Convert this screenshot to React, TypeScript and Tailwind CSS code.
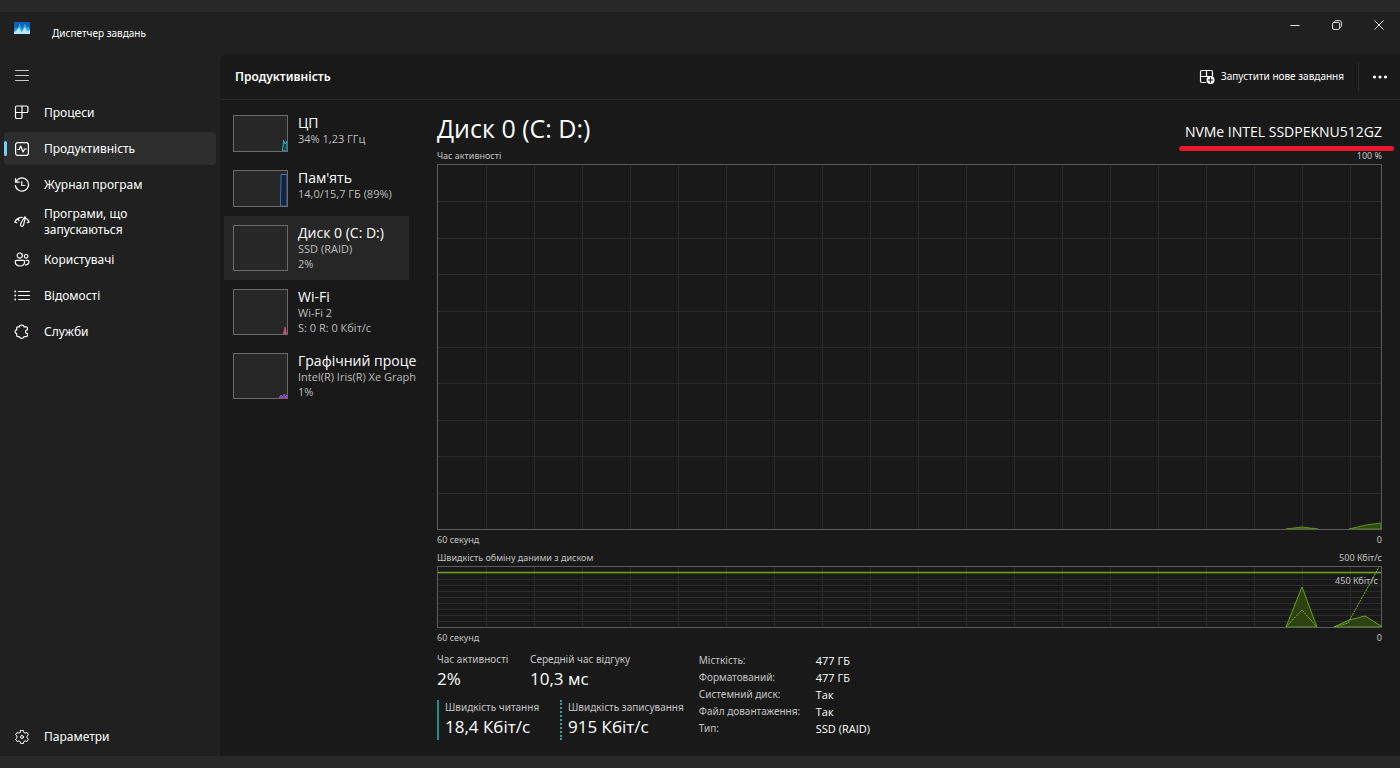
import type { ReactNode } from 'react';

interface NavItem { label: string; icon: ReactNode; active?: boolean; tall?: boolean; }

interface Resource {
  name: string;
  lines: string[];
  active?: boolean;
  graph?: ReactNode;
}

function Icon({ children }: { children: ReactNode }) {
  return (
    <svg
      viewBox="0 0 16 16"
      className="size-4 shrink-0"
      fill="none"
      stroke="currentColor"
      strokeWidth="1.2"
      strokeLinecap="round"
      strokeLinejoin="round"
      aria-hidden="true"
    >
      {children}
    </svg>
  );
}

const navItems: NavItem[] = [
  {
    label: 'Процеси',
    icon: (
      <Icon>
        <path d="M2.7 1h10a1.2 1.2 0 0 1 1.2 1.2v4.1a1.2 1.2 0 0 1-1.2 1.2H8v4.8a1.2 1.2 0 0 1-1.2 1.2H2.7a1.2 1.2 0 0 1-1.2-1.2V2.2A1.2 1.2 0 0 1 2.7 1ZM8 1v6.500H1.500" />
      </Icon>
    ),
  },
  {
    label: 'Продуктивність',
    active: true,
    icon: (
      <Icon>
        <rect x="1.6" y="1.6" width="12.8" height="12.8" rx="2.2" />
        <path d="M3.800 8.500h1.400l1.500-3.500 2.400 6 1.500-3h1.700" />
      </Icon>
    ),
  },
  {
    label: 'Журнал програм',
    icon: (
      <Icon>
        <path d="M1.500 1.500v3.700h3.700M1.800 5A6.600 6.600 0 1 1 1.400 8.600M7.800 4.500v4h3" />
      </Icon>
    ),
  },
  {
    label: 'Програми, що запускаються',
    tall: true,
    icon: (
      <Icon>
        <path d="M.8 8a8.400 8.400 0 0 1 7.400-4.700M12.200 4.600A8.400 8.400 0 0 1 15.200 8M.8 8l2 .8M4 4.700l1 1.900M15.200 8l-2 .8" />
        <path d="M10.600 3 7 9c-.9 1.600-.4 2.900.5 3.200s1.900-.3 2.200-1.800l1.700-7.100c.1-.6-.6-.7-.8-.3Z" />
      </Icon>
    ),
  },
  {
    label: 'Користувачі',
    icon: (
      <Icon>
        <circle cx="5.800" cy="3.600" r="2.600" />
        <circle cx="12.100" cy="4.300" r="1.800" />
        <path d="M2.500 8.300h6.800c.8 0 1.300.5 1.300 1.200 0 2.800-1.800 4.500-4.700 4.500s-4.700-1.700-4.700-4.500c0-.7.500-1.200 1.300-1.200ZM12 8.300h1.700c.7 0 1.200.5 1.200 1.200 0 2.300-1.200 3.400-3.400 3.400" />
      </Icon>
    ),
  },
  {
    label: 'Відомості',
    icon: (
      <Icon>
        <path d="M4.500 3.500h11M4.500 7.500h11M4.500 11.500h11" />
        <path d="M1.200 3.500h.1M1.200 7.500h.1M1.200 11.500h.1" strokeWidth="1.800" />
      </Icon>
    ),
  },
  {
    label: 'Служби',
    icon: (
      <Icon>
        <path d="M5.200 2.800c.3-2.200 4.700-2.200 4.800 0h2.300c.7 0 1.100.4 1.100 1v2c-2.500.1-2.500 3.700 0 3.800v2c0 .7-.4 1.100-1.100 1.100H10c-.2 2.100-4.500 2.100-4.800 0H3.800c-.7 0-1.100-.4-1.100-1.100V9.500C.5 9.200.5 6.200 2.700 5.800v-2c0-.6.400-1 1.100-1Z" />
      </Icon>
    ),
  },
];

const resources: Resource[] = [
  {
    name: 'ЦП',
    lines: ['34% 1,23 ГГц'],
    graph: (
      <svg viewBox="0 0 5 12" className="h-3 w-[5px]" aria-hidden="true">
        <path d="M.5 12 1.500 1l1.500 4L5 2v10Z" fill="#124a55" stroke="#2ba9bd" />
      </svg>
    ),
  },
  {
    name: "Пам'ять",
    lines: ['14,0/15,7 ГБ (89%)'],
    graph: (
      <svg viewBox="0 0 7 32" className="h-8 w-[7px]" aria-hidden="true">
        <path d="M.5 32 1 .5h6V32Z" fill="#14233f" stroke="#3f70b8" />
      </svg>
    ),
  },
  { name: 'Диск 0 (C: D:)', lines: ['SSD (RAID)', '2%'], active: true },
  {
    name: 'Wi-Fi',
    lines: ['Wi-Fi 2', 'S: 0 R: 0 Кбіт/с'],
    graph: (
      <svg viewBox="0 0 4 8" className="h-2 w-1" aria-hidden="true">
        <path d="M.5 8 2 1l1.500 7Z" fill="#d8507a" stroke="#d8507a" strokeWidth=".8" />
      </svg>
    ),
  },
  {
    name: 'Графічний проце',
    lines: ['Intel(R) Iris(R) Xe Graph', '1%'],
    graph: (
      <svg viewBox="0 0 8 5" className="h-[5px] w-2" aria-hidden="true">
        <path d="M0 5 2 2l1.500 2L5.500 1l1 3L7.500 2v3Z" fill="#7c3898" stroke="#b052d0" strokeWidth=".8" />
      </svg>
    ),
  },
];

const details = [
  ['Місткість:', '477 ГБ'],
  ['Форматований:', '477 ГБ'],
  ['Системний диск:', 'Так'],
  ['Файл довантаження:', 'Так'],
  ['Тип:', 'SSD (RAID)'],
];

// grid lines every 48 units across, ten rows down
function GridLines({ height }: { height: number }) {
  const cols = Array.from({ length: 19 }, (_, i) => (i + 1) * 48);
  const rows = Array.from({ length: 9 }, (_, i) => Math.round(((i + 1) * height) / 10));
  return (
    <g stroke="#2b2b2b" shapeRendering="crispEdges">
      {cols.map((x) => <line key={x} x1={x} x2={x} y1="0" y2={height} vectorEffect="non-scaling-stroke" />)}
      {rows.map((y) => <line key={y} x1="0" x2="943" y1={y} y2={y} vectorEffect="non-scaling-stroke" />)}
    </g>
  );
}

function AxisRow({ left, right }: { left: string; right?: string }) {
  return (
    <div className="flex h-[18px] items-end justify-between font-['Noto_Sans',sans-serif] text-[9px] leading-4 text-[#c4c4c4]">
      <span>{left}</span>
      <span>{right}</span>
    </div>
  );
}

function Stat({ label, value, className = '' }: { label: string; value: string; className?: string }) {
  return (
    <div className={`whitespace-nowrap ${className}`}>
      <div className="font-['Noto_Sans',sans-serif] text-[10px] leading-[14px] text-[#c4c4c4]">{label}</div>
      <div className="text-[17px] leading-[26px] text-white">{value}</div>
    </div>
  );
}

export default function App() {
  return (
    <div className="flex min-h-screen flex-col bg-[#282828] py-3 font-['Open_Sans',sans-serif] text-white">
      <div className="flex flex-1 flex-col bg-[#202020]">
        <header className="flex h-[42px] items-start justify-between">
          <div className="flex h-full items-center pl-3.5">
            <svg viewBox="0 0 16 12" className="mb-2.5 h-3 w-4" aria-hidden="true">
              <rect width="16" height="12" fill="#0c62b4" />
              <path d="M0 8 2 5l1.500 2L5.500 1.500 8 7l3-5.500L13 6l1.500-1.500L16 7v5H0Z" fill="#2ba4ea" />
              <path d="M0 10.500 3 8l2-3 2.500 5L9 8l2-3 2 4 3-1v4H0Z" fill="#b5e8fc" />
            </svg>
            <h1 className="ml-[22px] font-['Noto_Sans',sans-serif] text-[10px]">Диспетчер завдань</h1>
          </div>
          <div className="flex">
            <button aria-label="Згорнути" className="flex h-[26px] w-[42px] items-center justify-center">
              <svg viewBox="0 0 10 10" className="size-2.5" stroke="#e4e4e4"><path d="M.5 5.500h9" /></svg>
            </button>
            <button aria-label="Відновити" className="flex h-[26px] w-[42px] items-center justify-center">
              <svg viewBox="0 0 10 10" className="size-2.5" fill="none" stroke="#e4e4e4">
                <rect x=".6" y="2.400" width="7" height="7" rx="1.400" />
                <path d="M2.500 2.200C2.500 1 3.200.6 4.200.6h3c1.400 0 2.200.8 2.200 2.200v3c0 1-.4 1.700-1.600 1.700" />
              </svg>
            </button>
            <button aria-label="Закрити" className="flex h-[26px] w-[42px] items-center justify-center">
              <svg viewBox="0 0 10 10" className="size-2.5" stroke="#e4e4e4"><path d="m.5.5 9 9m0-9-9 9" /></svg>
            </button>
          </div>
        </header>

        <div className="flex flex-1">
          <nav className="flex w-[220px] shrink-0 flex-col px-1 pb-[3px] font-['Noto_Sans',sans-serif] text-[12px]">
            <button aria-label="Меню" className="flex h-[42px] items-center pl-2.5 text-[#c8c8c8]">
              <Icon><path d="M1.500 3.500h13M1.500 8.500h13M1.500 13.500h13" strokeWidth="1" /></Icon>
            </button>
            <div className="flex flex-col gap-[3px]">
              {navItems.map((item) => (
                <button
                  key={item.label}
                  className={`relative flex items-center gap-3.5 rounded pl-2.5 text-left leading-4 ${item.tall ? 'h-9 pr-16' : 'h-[33px]'} ${item.active ? 'bg-[#2d2d2d]' : ''}`}
                >
                  {item.active && <span className="absolute left-0 h-[15px] w-[3px] rounded-full bg-[#76cdf3]" />}
                  {item.icon}
                  <span>{item.label}</span>
                </button>
              ))}
            </div>
            <button className="mt-auto flex h-[33px] items-center gap-3.5 pl-2.5">
              <Icon>
                <path d="M6.700 1.500h2.600l.5 1.900 1.300.7 1.900-.6 1.400 2.300-1.400 1.400v1.600l1.400 1.400-1.400 2.300-1.900-.6-1.300.7-.5 1.900H6.700l-.5-1.900-1.300-.7-1.900.6-1.400-2.300L3 8.800V7.200L1.600 5.800 3 3.500l1.900.6 1.300-.7Z" strokeWidth="1" />
                <circle cx="8" cy="8" r="1.500" strokeWidth="1" />
              </Icon>
              <span>Параметри</span>
            </button>
          </nav>

          <main className="flex min-w-0 flex-1 flex-col rounded-tl-lg bg-[#191919]">
            <div className="flex h-[46px] items-center border-b border-[#2c2c2c] pl-[15px]">
              <h2 className="font-['Noto_Sans',sans-serif] text-[12px] font-semibold">Продуктивність</h2>
              <button className="ml-auto flex items-center gap-1.5 pr-3.5 font-['Noto_Sans',sans-serif] text-[10px]">
                <Icon>
                  <path d="M6.500 13.500H3A1.500 1.500 0 0 1 1.500 12V3A1.500 1.500 0 0 1 3 1.500h9A1.500 1.500 0 0 1 13.500 3v4M7.500 1.500v6M1.500 7.500h8" />
                  <circle cx="11.500" cy="11" r="4" fill="currentColor" stroke="none" />
                  <path d="M11.500 8.800v4.400M9.300 11h4.400" stroke="#191919" />
                </Icon>
                Запустити нове завдання
              </button>
              <button aria-label="Додатково" className="flex h-7 w-[42px] items-center justify-center border-l border-[#2c2c2c]">
                <svg viewBox="0 0 16 4" className="h-1 w-4" fill="#fff">
                  <circle cx="2.500" cy="2" r="1.600" />
                  <circle cx="8" cy="2" r="1.600" />
                  <circle cx="13.500" cy="2" r="1.600" />
                </svg>
              </button>
            </div>

            <div className="flex flex-1">
              <div className="w-48 shrink-0 pt-1.5 pr-[3px] pl-1">
                <div className="flex flex-col">
                  {resources.map((r) => (
                    <button
                      key={r.name}
                      className={`flex gap-2.5 py-[9px] pl-[9px] text-left whitespace-nowrap ${r.active ? 'bg-[#262626]' : ''}`}
                    >
                      <span
                        className={`flex w-[55px] shrink-0 items-end justify-end border border-[#6a6a6a] bg-[#272727] ${r.lines.length > 1 ? 'h-[46px]' : 'h-[37px]'}`}
                      >
                        {r.graph}
                      </span>
                      <span className="flex flex-col">
                        <span className="text-[14px] leading-4">{r.name}</span>
                        {r.lines.map((line) => (
                          <span key={line} className="text-[11px] leading-[15px] text-[#bdbdbd]">{line}</span>
                        ))}
                      </span>
                    </button>
                  ))}
                </div>
              </div>

              <section className="min-w-0 flex-1 pr-[18px] pl-[25px]">
                <div className="flex h-12 items-end justify-between">
                  <h3 className="text-[25px] leading-10">Диск 0 (C: D:)</h3>
                  <div className="relative text-[14px] leading-8">
                    NVMe INTEL SSDPEKNU512GZ
                    <span className="absolute -right-3 -bottom-[3px] -left-1.5 h-[5px] rounded-full bg-[#e8152b]" />
                  </div>
                </div>

                <div className="flex h-4 items-center justify-between font-['Noto_Sans',sans-serif] text-[9px] text-[#c4c4c4]">
                  <span>Час активності</span>
                  <span>100 %</span>
                </div>
                <div className="h-[366px] border border-[#5c5c5c]">
                  <svg viewBox="0 0 943 364" preserveAspectRatio="none" className="size-full">
                    <GridLines height={364} />
                    <path d="M848 364 864 362l16 2ZM911 364l17-4 15-2v6Z" fill="#2d4a10" stroke="#5f9414" />
                  </svg>
                </div>
                <AxisRow left="60 секунд" right="0" />

                <AxisRow left="Швидкість обміну даними з диском" right="500 Кбіт/с" />
                <div className="relative h-[62px] border border-[#5c5c5c]">
                  <svg viewBox="0 0 943 60" preserveAspectRatio="none" className="size-full">
                    <GridLines height={60} />
                    <path d="M0 5.500h943" stroke="#69a315" strokeWidth="1.500" />
                    <path d="M848 60 864 20l15 40ZM896 60l15-7 16-4 16 10v1Z" fill="#2d4210" stroke="#69a315" />
                    <path d="m848 60 16-17 15 17M896 60l14-4L941 0" fill="none" stroke="#7dba22" strokeDasharray="2 1" />
                  </svg>
                  <span className="absolute top-[7px] right-[3px] font-['Noto_Sans',sans-serif] text-[9px] leading-[14px] text-[#c4c4c4]">450 Кбіт/с</span>
                </div>
                <AxisRow left="60 секунд" right="0" />

                <div className="flex gap-[15px] pt-1.5">
                  <div className="flex flex-col gap-2">
                    <div className="flex">
                      <Stat label="Час активності" value="2%" className="w-[93px]" />
                      <Stat label="Середній час відгуку" value="10,3 мс" />
                    </div>
                    <div className="flex">
                      <Stat label="Швидкість читання" value="18,4 Кбіт/с" className="w-[123px] border-l-2 border-[#1f9188] pl-1.5" />
                      <Stat label="Швидкість записування" value="915 Кбіт/с" className="border-l-2 border-dotted border-[#2aa89d] pl-1.5" />
                    </div>
                  </div>
                  <table className="self-start text-left text-[11px] leading-[17px]">
                    <tbody>
                      {details.map(([label, value]) => (
                        <tr key={label}>
                          <th scope="row" className="w-[117px] font-['Noto_Sans',sans-serif] text-[10px] font-normal text-[#c4c4c4]">{label}</th>
                          <td>{value}</td>
                        </tr>
                      ))}
                    </tbody>
                  </table>
                </div>
              </section>
            </div>
          </main>
        </div>
      </div>
    </div>
  );
}
